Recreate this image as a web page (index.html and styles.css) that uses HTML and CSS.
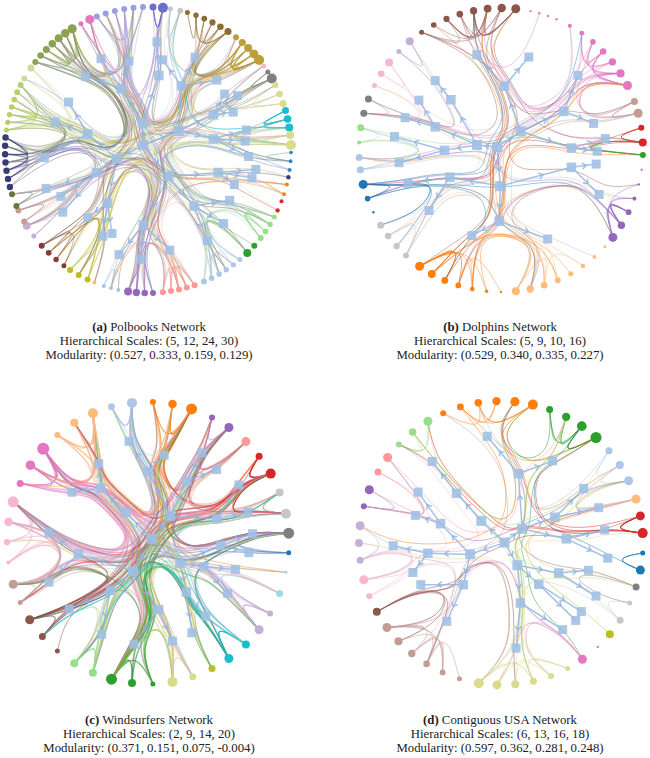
FILE: index.html
```html
<!DOCTYPE html>
<html lang="en">
<head>
<meta charset="utf-8">
<title>Hierarchical community networks</title>
<link rel="stylesheet" href="styles.css">
</head>
<body>
<div class="figure">
  <figure class="panel">
    <svg class="net" id="net-a" width="298" height="300"></svg>
    <figcaption class="caption">
      <span class="line"><b>(a)</b> Polbooks Network</span>
      <span class="line">Hierarchical Scales: (5, 12, 24, 30)</span>
      <span class="line">Modularity: (0.527, 0.333, 0.159, 0.129)</span>
    </figcaption>
  </figure>
  <figure class="panel">
    <svg class="net" id="net-b" width="300" height="300"></svg>
    <figcaption class="caption">
      <span class="line"><b>(b)</b> Dolphins Network</span>
      <span class="line">Hierarchical Scales: (5, 9, 10, 16)</span>
      <span class="line">Modularity: (0.529, 0.340, 0.335, 0.227)</span>
    </figcaption>
  </figure>
  <figure class="panel">
    <svg class="net" id="net-c" width="298" height="300"></svg>
    <figcaption class="caption">
      <span class="line"><b>(c)</b> Windsurfers Network</span>
      <span class="line">Hierarchical Scales: (2, 9, 14, 20)</span>
      <span class="line">Modularity: (0.371, 0.151, 0.075, -0.004)</span>
    </figcaption>
  </figure>
  <figure class="panel">
    <svg class="net" id="net-d" width="300" height="300"></svg>
    <figcaption class="caption">
      <span class="line"><b>(d)</b> Contiguous USA Network</span>
      <span class="line">Hierarchical Scales: (6, 13, 16, 18)</span>
      <span class="line">Modularity: (0.597, 0.362, 0.281, 0.248)</span>
    </figcaption>
  </figure>
</div>
<script src="script.js"></script>
</body>
</html>
```

FILE: styles.css
```css
html, body {
  margin: 0;
  padding: 0;
  background: #ffffff;
}

.figure {
  display: grid;
  grid-template-columns: 298px 300px;
  column-gap: 52px;
  row-gap: 31px;
}

.panel {
  margin: 0;
  display: flex;
  flex-direction: column;
}

.net {
  display: block;
  width: 100%;
  height: 300px;
  overflow: visible;
}

.caption {
  margin-top: 20px;
  font-family: "Liberation Serif", "DejaVu Serif", serif;
  font-size: 12.8px;
  line-height: 14px;
  text-align: center;
  color: #222222;
}

.caption .line {
  display: block;
  white-space: nowrap;
}

.caption b {
  font-weight: bold;
}
```

FILE: script.js
```js
(function () {
  var NS = 'http://www.w3.org/2000/svg';

  function mk(tag, attrs, parent) {
    var e = document.createElementNS(NS, tag);
    for (var k in attrs) e.setAttribute(k, attrs[k]);
    if (parent) parent.appendChild(e);
    return e;
  }
  function rng(a) {
    return function () {
      a |= 0; a = a + 0x6D2B79F5 | 0;
      var t = Math.imul(a ^ a >>> 15, 1 | a);
      t = t + Math.imul(t ^ t >>> 7, 61 | t) ^ t;
      return ((t ^ t >>> 14) >>> 0) / 4294967296;
    };
  }
  function pol(cx, cy, r, deg) {
    var t = deg * Math.PI / 180;
    return [cx + r * Math.sin(t), cy - r * Math.cos(t)];
  }
  function r2(v) { return Math.round(v * 10) / 10; }
  function cmean(angs) {
    var sx = 0, sy = 0;
    angs.forEach(function (a) { sx += Math.sin(a * Math.PI / 180); sy += Math.cos(a * Math.PI / 180); });
    return Math.atan2(sx, sy) * 180 / Math.PI;
  }
  function seg(x0, y0, x1, y1, x, y) {
    return 'C' + r2((2 * x0 + x1) / 3) + ',' + r2((2 * y0 + y1) / 3) + ' ' +
      r2((x0 + 2 * x1) / 3) + ',' + r2((y0 + 2 * y1) / 3) + ' ' +
      r2((x0 + 4 * x1 + x) / 6) + ',' + r2((y0 + 4 * y1 + y) / 6);
  }
  function basisPath(pts) {
    var n = pts.length;
    var d = 'M' + r2(pts[0][0]) + ',' + r2(pts[0][1]);
    if (n === 2) return d + 'L' + r2(pts[1][0]) + ',' + r2(pts[1][1]);
    var x0 = pts[0][0], y0 = pts[0][1], x1 = pts[1][0], y1 = pts[1][1];
    d += 'L' + r2((5 * x0 + x1) / 6) + ',' + r2((5 * y0 + y1) / 6);
    for (var i = 2; i < n; i++) {
      var x = pts[i][0], y = pts[i][1];
      d += seg(x0, y0, x1, y1, x, y);
      x0 = x1; y0 = y1; x1 = x; y1 = y;
    }
    d += seg(x0, y0, x1, y1, x1, y1);
    d += 'L' + r2(x1) + ',' + r2(y1);
    return d;
  }
  function bundle(pts, beta) {
    var n = pts.length - 1, x0 = pts[0][0], y0 = pts[0][1];
    var dx = pts[n][0] - x0, dy = pts[n][1] - y0;
    return pts.map(function (p, i) {
      var t = i / n;
      return [beta * p[0] + (1 - beta) * (x0 + t * dx), beta * p[1] + (1 - beta) * (y0 + t * dy)];
    });
  }

  var BLUE = '#9fbfe4';
  var LINE = '#8fb2dd';

  var panels = [
    {
      id: 'net-a', cx: 148, cy: 150, R: 143, seed: 7, edges: 400, op: 0.4, w: 0.95, beta: 0.85,
      pIntra: 0.33, pClus: 0.27, cs: 3, ss: 3,
      groups: [
        ['#c7c7c7', 9, 13, 2, 2.5, 3], ['#8c6d31', 16, 34, 6, 2.5, 3.5], ['#bd9e39', 38, 51, 5, 3, 5],
        ['#f7b6d2', 54, 54, 1, 2.5, 2.5], ['#7f7f7f', 57, 60, 2, 2.5, 5], ['#dbdb8d', 63, 71, 3, 3, 3.5],
        ['#17becf', 74, 81, 3, 3.5, 4], ['#dbdb8d', 84, 88, 2, 4, 5], ['#3182bd', 91, 98, 3, 1.8, 2],
        ['#393b79', 101, 101, 1, 2.2, 2.2], ['#ff7f0e', 104, 108, 2, 2, 2], ['#d62728', 111, 115, 2, 2, 2.2],
        ['#98df8a', 118, 128, 4, 2.5, 3], ['#2ca02c', 132, 136, 2, 3, 4], ['#aec7e8', 140, 157, 6, 2.5, 3],
        ['#ff9896', 161, 174, 5, 3, 3], ['#9467bd', 178, 188, 4, 3, 4], ['#9ecae1', 192, 198, 3, 2, 2],
        ['#ffbb78', 202, 202, 1, 2, 2], ['#bcbd22', 205, 213, 3, 3, 3], ['#843c39', 216, 228, 4, 2.5, 3],
        ['#c5b0d5', 233, 238, 2, 2.5, 4], ['#c49c94', 240, 245, 2, 3, 3], ['#637939', 247, 252, 2, 3, 3],
        ['#393b79', 255, 275, 7, 3.2, 3.2], ['#b5cf6b', 278, 297, 7, 2.5, 3], ['#cedb9c', 300, 305, 2, 3, 3.5],
        ['#8ca252', 308, 328, 7, 3, 4.5], ['#e377c2', 332, 336, 2, 2.5, 4.5], ['#9c9ede', 339, 358, 6, 3, 3],
        ['#6b6ecf', 362, 366, 2, 3.5, 5]
      ]
    },
    {
      id: 'net-b', cx: 151, cy: 150, R: 142, seed: 21, edges: 160, op: 0.48, w: 0.9, beta: 0.85,
      pIntra: 0.35, pClus: 0.25, cs: 2, ss: 3,
      groups: [
        ['#8c564b', 326, 366, 8, 2.5, 4.5], ['#e377c2', 12, 23, 4, 1.2, 1.2], ['#e377c2', 29, 63, 7, 2, 4.5],
        ['#c49c94', 70, 75, 2, 3.5, 4.5], ['#d62728', 81, 87, 2, 3, 4], ['#2ca02c', 92, 92, 1, 3, 3],
        ['#e377c2', 98, 98, 1, 1.2, 1.2], ['#9467bd', 104, 128, 5, 1.2, 4.5], ['#ffbb78', 133, 174, 8, 1.5, 4],
        ['#ff7f0e', 180, 215, 7, 1.2, 4.5], ['#c7c7c7', 222, 238, 4, 3, 3.5], ['#1f77b4', 244, 256, 3, 1.2, 4.5],
        ['#aec7e8', 262, 267, 2, 3.5, 3.5], ['#98df8a', 273, 279, 2, 2, 3.5], ['#7f7f7f', 285, 291, 2, 3.5, 3.5],
        ['#f7b6d2', 297, 308, 3, 2.5, 4], ['#c5b0d5', 314, 320, 2, 2.5, 4]
      ]
    },
    {
      id: 'net-c', cx: 148, cy: 150, R: 141, seed: 33, edges: 330, op: 0.44, w: 1.15, beta: 0.85,
      pIntra: 0.22, pClus: 0.2, cs: 2, ss: 3,
      groups: [
        ['#aec7e8', 345, 353.5, 2, 3.5, 5], ['#ff7f0e', 362, 378, 3, 3, 5.5], ['#9467bd', 387, 395, 2, 3, 4.5],
        ['#ff9896', 404, 404, 1, 4.5, 4.5], ['#d62728', 412, 420.5, 2, 3.5, 5], ['#c7c7c7', 429, 438, 2, 4, 5],
        ['#7f7f7f', 446, 446, 1, 5.5, 5.5], ['#1f77b4', 454, 454, 1, 2.5, 2.5], ['#9edae5', 462, 471, 2, 1.5, 3.5],
        ['#c5b0d5', 480, 488, 2, 3, 4.5], ['#17becf', 496, 505, 2, 4, 4.5], ['#bcbd22', 513, 513, 1, 3.5, 3.5],
        ['#dbdb8d', 521.5, 530, 2, 3.5, 5], ['#2ca02c', 538, 555, 3, 2.5, 5.5], ['#98df8a', 563, 571.5, 2, 4, 4],
        ['#8c564b', 580, 597, 3, 2.5, 4.5], ['#c49c94', 605, 613, 2, 2.5, 4.5], ['#f7b6d2', 622, 647, 4, 2, 5.5],
        ['#e377c2', 655, 672, 3, 3.5, 6], ['#ffbb78', 680, 697, 3, 3, 5]
      ]
    },
    {
      id: 'net-d', cx: 151, cy: 150, R: 142, seed: 45, edges: 115, op: 0.55, w: 0.9, beta: 0.85,
      pIntra: 0.3, pClus: 0.35, cs: 2, ss: 3,
      groups: [
        ['#ff7f0e', 336, 373, 6, 3, 5], ['#2ca02c', 20, 42, 4, 3.5, 5.5], ['#aec7e8', 49.5, 64, 3, 3.5, 4.5],
        ['#ffbb78', 72, 72, 1, 4.5, 4.5], ['#d62728', 79, 86, 2, 4.5, 5], ['#1f77b4', 94, 101, 2, 2.5, 4.5],
        ['#7f7f7f', 108, 108, 1, 3.5, 3.5], ['#c7c7c7', 115, 123, 2, 2.5, 3.5], ['#bcbd22', 130, 130, 1, 4, 4],
        ['#e377c2', 137, 137, 1, 1.2, 1.2], ['#e377c2', 145, 145, 1, 4.5, 4.5], ['#dbdb8d', 152, 189, 6, 2.5, 5],
        ['#c49c94', 197, 233.5, 6, 2.5, 4.5], ['#8c564b', 241, 241, 1, 4, 4], ['#f7b6d2', 248, 255, 2, 3, 4.5],
        ['#c5b0d5', 263, 277, 3, 3.5, 4.5], ['#9467bd', 285, 292, 2, 3, 4.5], ['#ff9896', 300, 307, 2, 3.5, 4.5],
        ['#98df8a', 314, 329, 3, 3, 4.5]
      ]
    }
  ];

  function pickWeighted(list, rand) {
    var tot = 0;
    list.forEach(function (n) { tot += n.s * n.s; });
    var x = rand() * tot;
    for (var i = 0; i < list.length; i++) {
      x -= list[i].s * list[i].s;
      if (x <= 0) return list[i];
    }
    return list[list.length - 1];
  }

  function chevron(parent, a, b, t) {
    var x = a[0] + (b[0] - a[0]) * t, y = a[1] + (b[1] - a[1]) * t;
    var dx = b[0] - a[0], dy = b[1] - a[1], L = Math.sqrt(dx * dx + dy * dy) || 1;
    dx /= L; dy /= L;
    var nx = -dy, ny = dx;
    var p1 = [r2(x - 4 * dx + 3 * nx), r2(y - 4 * dy + 3 * ny)];
    var p2 = [r2(x - 4 * dx - 3 * nx), r2(y - 4 * dy - 3 * ny)];
    mk('polyline', { points: p1.join(',') + ' ' + r2(x) + ',' + r2(y) + ' ' + p2.join(',') }, parent);
  }

  function draw(P) {
    var svg = document.getElementById(P.id);
    if (!svg) return;
    var rand = rng(P.seed);
    var nodes = [], groups = [];
    P.groups.forEach(function (g) {
      var G = { color: g[0], nodes: [] };
      var n = g[3];
      for (var i = 0; i < n; i++) {
        var t = n === 1 ? 0.5 : i / (n - 1);
        var ang = g[1] + (g[2] - g[1]) * t;
        var node = { ang: ang, s: g[4] + (g[5] - g[4]) * t, g: G, color: g[0] };
        node.p = pol(P.cx, P.cy, P.R, ang);
        nodes.push(node); G.nodes.push(node);
      }
      G.ang = (g[1] + g[2]) / 2 + (rand() - 0.5) * 4;
      G.p = pol(P.cx, P.cy, P.R * (0.7 + (rand() - 0.5) * 0.14), G.ang);
      groups.push(G);
    });
    var clusters = [];
    for (var i = 0; i < groups.length; i += P.cs) {
      var m = groups.slice(i, i + P.cs);
      var C = { members: m };
      C.ang = cmean(m.map(function (g) { return g.ang; })) + (rand() - 0.5) * 14;
      C.p = pol(P.cx, P.cy, P.R * (0.46 + (rand() - 0.5) * 0.14), C.ang);
      m.forEach(function (g) { g.c = C; });
      clusters.push(C);
    }
    var supers = [];
    for (var j = 0; j < clusters.length; j += P.ss) {
      var ms = clusters.slice(j, j + P.ss);
      var S = { members: ms };
      S.ang = cmean(ms.map(function (c) { return c.ang; })) + (rand() - 0.5) * 20;
      S.p = pol(P.cx, P.cy, P.R * (0.22 + (rand() - 0.5) * 0.1), S.ang);
      ms.forEach(function (c) { c.s = S; });
      supers.push(S);
    }
    var root = [P.cx + (rand() - 0.5) * 10, P.cy + (rand() - 0.5) * 10];

    var gE = mk('g', { fill: 'none', 'stroke-linecap': 'round', 'stroke-width': P.w, 'stroke-opacity': P.op }, svg);
    var made = 0, guard = 0;
    while (made < P.edges && guard < P.edges * 20) {
      guard++;
      var u = pickWeighted(nodes, rand), v, x = rand(), pts;
      if (x < P.pIntra && u.g.nodes.length > 1) {
        v = pickWeighted(u.g.nodes, rand);
      } else if (x < P.pIntra + P.pClus) {
        var pool = [];
        u.g.c.members.forEach(function (g) { pool = pool.concat(g.nodes); });
        v = pickWeighted(pool, rand);
      } else {
        v = pickWeighted(nodes, rand);
      }
      if (v === u) continue;
      var gu = u.g, gv = v.g;
      if (gu === gv) pts = [u.p, gu.p, v.p];
      else if (gu.c === gv.c) pts = [u.p, gu.p, gu.c.p, gv.p, v.p];
      else if (gu.c.s === gv.c.s) pts = [u.p, gu.p, gu.c.p, gu.c.s.p, gv.c.p, gv.p, v.p];
      else pts = [u.p, gu.p, gu.c.p, gu.c.s.p, root, gv.c.s.p, gv.c.p, gv.p, v.p];
      mk('path', { d: basisPath(bundle(pts, P.beta)), stroke: u.color }, gE);
      made++;
    }

    var gT = mk('g', { fill: 'none', stroke: LINE, 'stroke-width': 1.5, 'stroke-opacity': 0.8, 'stroke-linejoin': 'round' }, svg);
    function link(a, b) {
      mk('line', { x1: r2(a[0]), y1: r2(a[1]), x2: r2(b[0]), y2: r2(b[1]) }, gT);
      chevron(gT, a, b, 0.6);
    }
    groups.forEach(function (g) { link(g.c.p, g.p); });
    clusters.forEach(function (c) { link(c.s.p, c.p); });
    supers.forEach(function (s) { link(root, s.p); });

    var gS = mk('g', { fill: BLUE, 'fill-opacity': 0.88 }, svg);
    function sq(p, sz) {
      mk('rect', { x: r2(p[0] - sz / 2), y: r2(p[1] - sz / 2), width: sz, height: sz }, gS);
    }
    groups.forEach(function (g) { sq(g.p, 9); });
    clusters.forEach(function (c) { sq(c.p, 9.5); });
    supers.forEach(function (s) { sq(s.p, 10); });
    sq(root, 10);

    var gN = mk('g', {}, svg);
    nodes.forEach(function (n) {
      mk('circle', { cx: r2(n.p[0]), cy: r2(n.p[1]), r: n.s, fill: n.color }, gN);
    });
  }

  panels.forEach(draw);
})();
```
